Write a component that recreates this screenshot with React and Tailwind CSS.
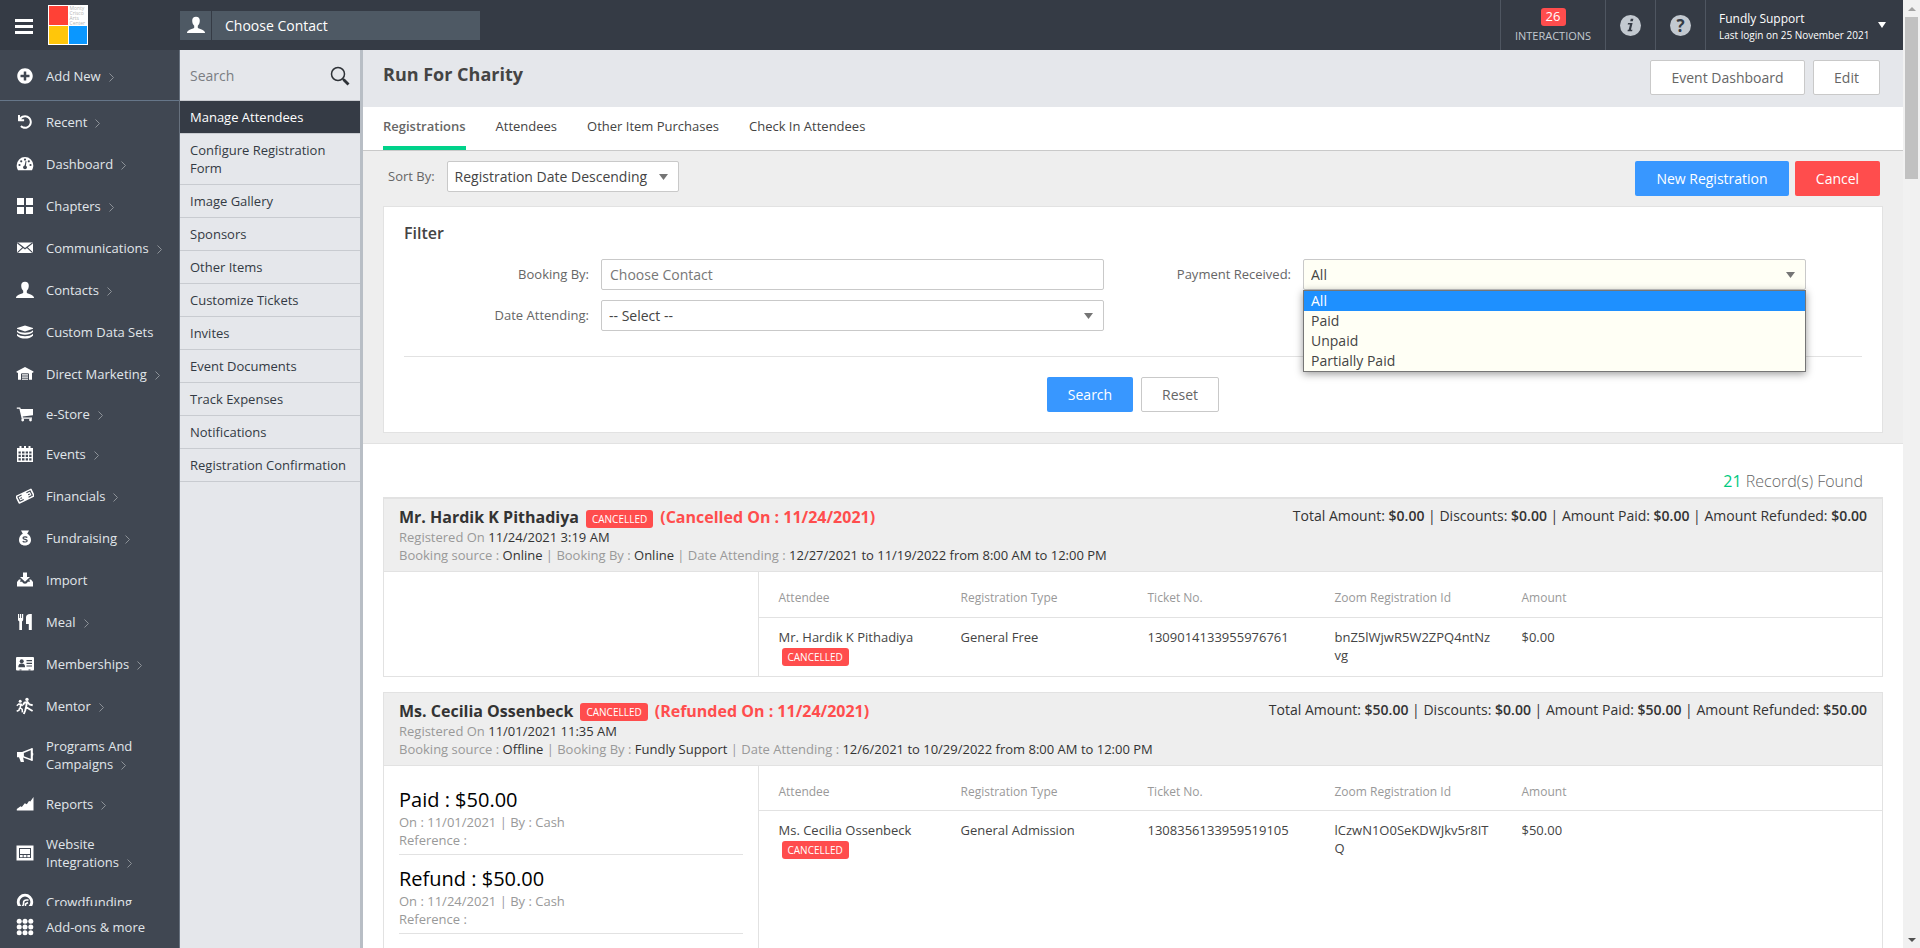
import React from "react";
import { FaPlusCircle, FaUndo } from "react-icons/fa";

const DARK = "#404752";

function Glyph({ children, className = "size-[18px]" }) {
  return (
    <svg viewBox="0 0 18 18" className={`${className} shrink-0`} fill="currentColor" aria-hidden="true">
      {children}
    </svg>
  );
}

const UserShape = () => (
  <path d="M9 .8c2.500 0 3.800 1.600 3.800 4 0 2.100-.8 4-2 5v2c0 1 6.200 1.600 7.200 4.600V17H0v-.6c1-3 7.200-3.600 7.200-4.600v-2c-1.200-1-2-2.900-2-5C5.200 2.400 6.500.8 9 .8z" />
);

const icons = {
  dashboard: (
    <>
      <path d="M9 2a8.300 8.300 0 0 0-8.300 8.300c0 2 .5 3.500 1.300 4.900h14c.8-1.400 1.300-2.900 1.300-4.900A8.300 8.300 0 0 0 9 2z" />
      <g fill={DARK}>
        <circle cx="3.500" cy="10" r="1.100" />
        <circle cx="5.200" cy="6.300" r="1.100" />
        <circle cx="9" cy="4.600" r="1.100" />
        <circle cx="12.800" cy="6.300" r="1.100" />
        <circle cx="14.500" cy="10" r="1.100" />
        <circle cx="9" cy="12.300" r="1.900" />
        <path d="M8.400 11.500l1.200-5.500.9.200-.7 5.600z" />
      </g>
    </>
  ),
  chapters: <path d="M1 1h7v7H1zM10 1h7v7h-7zM1 10h7v7H1zM10 10h7v7h-7z" />,
  mail: (
    <>
      <rect x="1" y="3.500" width="16" height="10.500" rx="1" />
      <path d="M1.500 4L9 9.800 16.500 4M1.500 13.700l5.200-5M16.500 13.700l-5.200-5" stroke={DARK} strokeWidth="1.100" fill="none" />
    </>
  ),
  user: <UserShape />,
  stack: (
    <>
      <path d="M9 2.500l8 2.400v.8L9 8.400 1 5.700v-.8z" />
      <path d="M1 7.200c2 1.800 5 2.500 8 2.500s6-.7 8-2.500v1.900C15 11 12 11.800 9 11.800S3 11 1 9.100z" />
      <path d="M1 10.700c2 1.800 5 2.500 8 2.500s6-.7 8-2.500v2C15 14.700 12 15.500 9 15.500s-6-.8-8-2.800z" />
    </>
  ),
  house: (
    <>
      <path d="M9 2l8.600 4.600-.5 1.200H16v7H2v-7H.9L.4 6.600z" />
      <path d="M5.500 15V8.800h7V15M5.500 11h7M5.500 13.200h7" fill="none" stroke={DARK} strokeWidth="1" />
    </>
  ),
  cart: (
    <>
      <path d="M.8 2.500h3.400l.6 1.500H17v6.300L6.700 11.600l.2 1H16v1.200H5.700L3.400 3.800H.8z" />
      <circle cx="6.700" cy="15" r="1.400" />
      <circle cx="14.500" cy="15" r="1.400" />
    </>
  ),
  calendar: (
    <>
      <path d="M1 3h2.500V1h2v2h2.500V1h2v2h2.500V1h2v2H17v14H1z" />
      <path
        d="M2.500 6.500h2.300v2H2.500zM6 6.500h2.500v2H6zM9.700 6.500h2.300v2H9.700zM13.200 6.500h2.300v2h-2.300zM2.500 9.800h2.300V12H2.500zM6 9.800h2.500V12H6zM9.700 9.800h2.300V12H9.700zM13.200 9.800h2.300V12h-2.300zM2.500 13.300h2.300v2.200H2.500zM6 13.300h2.500v2.200H6zM9.700 13.300h2.300v2.200H9.700zM13.200 13.300h2.300v2.200h-2.300z"
        fill={DARK}
      />
    </>
  ),
  money: (
    <g transform="rotate(-26 9 9)">
      <rect x="0" y="4.800" width="18" height="8.800" rx=".8" />
      <g fill="none" stroke={DARK} strokeWidth="1.100">
        <path d="M6.300 6.700H2.200v4.900h4.100M11.700 6.700h4.100v4.900h-4.100" />
        <path d="M3.800 9.200h1.800M12.400 9.200h1.800" />
      </g>
    </g>
  ),
  bag: (
    <>
      <path d="M5 1.500h8l-1.800 3.300C13.600 6 15 8.300 15 11c0 3.300-2.500 5.500-6 5.500S3 14.300 3 11c0-2.700 1.400-5 3.800-6.200z" />
      <path d="M11.300 8.500c-1-1-4.300-1-4.300.6 0 1.700 4.200 1 4.200 2.700 0 1.500-3.200 1.600-4.500.4" stroke={DARK} strokeWidth="1.200" fill="none" />
    </>
  ),
  import: (
    <>
      <path d="M7 1.500h4v4.500h3L9 10.800 4 6h3z" />
      <path d="M1 11l2-2.500h1.800L4 10.800h2.200c.5 1.300 1.500 2 2.800 2s2.300-.7 2.800-2H14l-.8-2.300H15l2 2.500v4.500H1z" />
    </>
  ),
  meal: (
    <>
      <path d="M2 1h1.200v4h.8V1h1.200v4h.8V1h1.200v5.500c0 1-.6 1.500-1.200 2V17H3.300V8.500C2.600 8 2 7.500 2 6.500z" />
      <path d="M10 4.500C10 2.300 11.500 1 14 1h1.800v16h-3v-6H10z" />
    </>
  ),
  card: (
    <>
      <rect x="0" y="2" width="18" height="13.500" rx="1" />
      <g fill={DARK}>
        <circle cx="5.700" cy="6.300" r="2" />
        <path d="M2.300 12.200c0-2.800 1.300-3.700 3.400-3.700s3.400.9 3.400 3.700zM10.500 5h5.500v1.200h-5.500zM10.500 7.700h5.500v1.200h-5.500zM10.500 10.400h5.500v1.200h-5.500zM3.500 14.500h2v1h-2zM12.500 14.500h2v1h-2z" />
      </g>
    </>
  ),
  mentor: (
    <>
      <circle cx="4.200" cy="4.200" r="1.500" />
      <circle cx="11" cy="2.400" r="1.700" />
      <path
        d="M.8 8.800l2-1.800 2.400.3 1.300 1.900M4.600 7.500l-.4 3.300 2 1.600.2 3M3.600 11l-.6 2.300-2.300.9"
        stroke="currentColor"
        strokeWidth="1.500"
        fill="none"
      />
      <path
        d="M7 8l1.500-2.500 3-.5 2 2.500 3.200.7M10.900 5.500l-.8 4.500 3.500 2.200 3 1.800M10 10.300l-.8 3.200-1.400 3.500"
        stroke="currentColor"
        strokeWidth="1.900"
        fill="none"
      />
    </>
  ),
  horn: (
    <>
      <path d="M1 6h6.500v5H7l1 5H4.800L3 11.200H1z" />
      <path d="M7 6.500L15.500 3v11L7 10.800z" fill="none" stroke="currentColor" strokeWidth="1.500" />
      <path d="M15.500 2.200h1.300v4.600c.7.400.7 2.600 0 3v4.900h-1.300z" />
    </>
  ),
  chart: <path d="M.8 15.500v-1.500l3.800-2.800 1.200.8 3-3.800 2 1L13 5.900l1.300.5L17.500 2v13.500z" />,
  site: (
    <>
      <path d="M.5 1.500h17v15H.5z" />
      <path d="M3 4h12v10H3z" fill={DARK} />
      <path d="M4 5h10v5H4zM4 11h2.700v2.200H4zM7.600 11h2.800v2.200H7.600zM11.300 11H14v2.200h-2.700z" />
    </>
  ),
  crowd: (
    <>
      <circle cx="9" cy="9" r="6.800" fill="none" stroke="currentColor" strokeWidth="2.800" />
      <path d="M6 14l1.500-2.500V10C7.500 8 8.500 7 10.500 7h2M9.500 14v-3l2.500-1.500" fill="none" stroke="currentColor" strokeWidth="1.500" />
    </>
  ),
  grid: (
    <>
      {[3.2, 9, 14.8].map((y) => [3.2, 9, 14.8].map((x) => <circle key={`${x}-${y}`} cx={x} cy={y} r="2.500" />))}
    </>
  ),
};

const nav = [
  ["Recent", null, true],
  ["Dashboard", "dashboard", true],
  ["Chapters", "chapters", true],
  ["Communications", "mail", true],
  ["Contacts", "user", true],
  ["Custom Data Sets", "stack", false],
  ["Direct Marketing", "house", true],
  ["e-Store", "cart", true, "h-[38px]"],
  ["Events", "calendar", true],
  ["Financials", "money", true],
  ["Fundraising", "bag", true],
  ["Import", "import", false],
  ["Meal", "meal", true],
  ["Memberships", "card", true],
  ["Mentor", "mentor", true],
  ["Programs And Campaigns", "horn", true, "h-14"],
  ["Reports", "chart", true],
  ["Website Integrations", "site", true, "h-14"],
  ["Crowdfunding", "crowd", false],
];

const subNav = [
  "Manage Attendees",
  "Configure Registration Form",
  "Image Gallery",
  "Sponsors",
  "Other Items",
  "Customize Tickets",
  "Invites",
  "Event Documents",
  "Track Expenses",
  "Notifications",
  "Registration Confirmation",
];

function Arrow() {
  return (
    <svg viewBox="0 0 5 9" className="ml-2 inline-block h-[9px] w-[5px]" aria-hidden="true">
      <path d="M.5.5l4 4-4 4" fill="none" stroke="#8d9298" strokeWidth="1" />
    </svg>
  );
}

function NavItem({ label, icon, arrow, height = "h-[42px]" }) {
  return (
    <a href="#" className={`flex shrink-0 items-center gap-3 pl-4 text-[13px] leading-[18px] text-[#e1e6ea] ${height}`}>
      <span className="flex w-[18px] shrink-0 justify-center text-white">{icon}</span>
      <span className="max-w-[118px]">
        {label}
        {arrow && <Arrow />}
      </span>
    </a>
  );
}

function Header() {
  return (
    <header className="flex h-[50px] shrink-0 bg-[#353b45] text-white">
      <div className="flex w-[180px] shrink-0 items-center gap-[15px] pl-[15px]">
        <button type="button" aria-label="Menu" className="flex w-[18px] flex-col gap-[3px] pt-[3px]">
          <span className="h-[3px] w-full bg-white" />
          <span className="h-[3px] w-full bg-white" />
          <span className="h-[3px] w-full bg-white" />
        </button>
        <div className="grid size-10 grid-cols-2 grid-rows-2 gap-px overflow-hidden bg-white p-px">
          <span className="bg-[#ff4136]" />
          <span className="min-h-0 pl-px text-[5px] leading-[5px] text-[#b5b5b5]">
            Monty
            <br />
            Crisco
            <br />
            Arts
            <br />
            Center
          </span>
          <span className="bg-[#ffc60a]" />
          <span className="bg-[#0a97ff]" />
        </div>
      </div>
      <div className="flex w-[300px] items-center gap-px">
        <span className="flex h-[29px] w-[31px] items-center justify-center bg-[#4e5964]">
          <Glyph>
            <UserShape />
          </Glyph>
        </span>
        <input
          aria-label="Choose Contact"
          placeholder="Choose Contact"
          className="h-[29px] min-w-0 flex-1 bg-[#4e5964] px-[13px] text-sm text-white placeholder:text-white"
        />
      </div>
      <div className="ml-auto flex">
        <a href="#" className="flex w-[105px] flex-col items-center border-l border-[#4f5661] pt-2 text-[#c3c9d0]">
          <span className="flex h-[18px] w-[25px] items-center justify-center rounded-[3px] bg-[#ff4d4d] text-[13px] text-white">26</span>
          <span className="mt-[3px] text-[11px] leading-[14px]">INTERACTIONS</span>
        </a>
        <button type="button" aria-label="Information" className="flex w-[50px] items-center justify-center border-l border-[#4f5661] text-[#c3c9d0]">
          <svg viewBox="0 0 21 21" className="size-[21px]" aria-hidden="true">
            <circle cx="10.500" cy="10.500" r="10.500" fill="currentColor" />
            <path d="M10.800 3.800h2.600l-.6 2.500h-2.600zM8 8h4.600l-1.700 6.800h1.500l-.3 1.400H7.500l.3-1.400h.9L10 9.400H7.700z" fill="#353b45" />
          </svg>
        </button>
        <button type="button" aria-label="Help" className="flex w-[50px] items-center justify-center border-l border-[#4f5661]">
          <span className="flex size-[21px] items-center justify-center rounded-full bg-[#c3c9d0] text-[17px] leading-[21px] font-bold text-[#353b45]">?</span>
        </button>
        <button type="button" className="flex w-[198px] items-center gap-[9px] border-l border-[#4f5661] pl-[13px] text-left">
          <span className="pt-[3px]">
            <span className="block text-xs leading-4">Fundly Support</span>
            <span className="block text-[10px] leading-4">Last login on 25 November 2021</span>
          </span>
          <svg viewBox="0 0 8 6" className="h-[6px] w-2" aria-hidden="true">
            <path d="M0 0h8L4 6z" fill="#fff" />
          </svg>
        </button>
      </div>
    </header>
  );
}

function Caret() {
  return (
    <svg viewBox="0 0 9 6" className="pointer-events-none absolute top-[13px] right-[11px] h-[6px] w-[9px]" aria-hidden="true">
      <path d="M0 0h9L4.500 6z" fill="#757575" />
    </svg>
  );
}

const field = "h-[31px] w-full appearance-none rounded-xs border border-[#c9c9c9] text-sm text-[#444]";

function Select({ id, options, tone = "bg-white", children }) {
  return (
    <div className="relative min-w-0 flex-1">
      <select id={id} className={`${field} px-[7px] ${tone}`}>
        {options.map((o) => (
          <option key={o}>{o}</option>
        ))}
      </select>
      <Caret />
      {children}
    </div>
  );
}

const btn = "h-[35px] rounded-xs text-sm";
const plainBtn = `${btn} border border-[#c9c9c9] bg-white text-[#666]`;

function FieldLabel({ htmlFor, children }) {
  return (
    <label htmlFor={htmlFor} className="w-[185px] shrink-0 pt-px text-right text-[13px] text-[#666]">
      {children}
    </label>
  );
}

const payOptions = ["All", "Paid", "Unpaid", "Partially Paid"];

function FilterPanel() {
  return (
    <section className="border border-[#e2e2e2] bg-white px-5 pt-4 pb-5">
      <h2 className="text-base leading-5 font-semibold text-[#444]">Filter</h2>
      <div className="mt-4 grid grid-cols-2 gap-x-[2px] gap-y-[10px] pr-14">
        <div className="flex items-center gap-3">
          <FieldLabel htmlFor="booking">Booking By:</FieldLabel>
          <input id="booking" placeholder="Choose Contact" className={`${field} bg-white px-2 placeholder:text-[#777]`} />
        </div>
        <div className="flex items-center gap-3">
          <FieldLabel htmlFor="payment">Payment Received:</FieldLabel>
          <Select id="payment" options={payOptions} tone="bg-[#fffff5]">
            <ul className="absolute inset-x-0 top-[31px] z-10 border border-[#767676] bg-[#fffff5] text-sm leading-5 text-[#444] shadow-[0_2px_8px_rgba(0,0,0,0.4)]">
              {payOptions.map((o) => (
                <li key={o} className={`px-[7px] ${o === "All" ? "bg-[#1e90ff] text-white" : ""}`}>
                  {o}
                </li>
              ))}
            </ul>
          </Select>
        </div>
        <div className="flex items-center gap-3">
          <FieldLabel htmlFor="date">Date Attending:</FieldLabel>
          <Select id="date" options={["-- Select --"]} />
        </div>
      </div>
      <div className="mt-[25px] flex justify-center gap-2 border-t border-[#e2e2e2] pt-5">
        <button type="button" className={`${btn} w-[86px] bg-[#3897ff] text-white`}>Search</button>
        <button type="button" className={`${plainBtn} w-[78px]`}>Reset</button>
      </div>
    </section>
  );
}

function Badge({ className = "" }) {
  return (
    <span className={`inline-block h-[18px] rounded-[3px] bg-[#ff4d4d] px-[6px] text-[10px] leading-[18px] font-normal text-white ${className}`}>
      CANCELLED
    </span>
  );
}

const records = [
  {
    name: "Mr. Hardik K Pithadiya",
    status: "(Cancelled On : 11/24/2021)",
    registered: "11/24/2021 3:19 AM",
    source: "Online",
    by: "Online",
    dates: "12/27/2021 to 11/19/2022 from 8:00 AM to 12:00 PM",
    totals: ["$0.00", "$0.00", "$0.00", "$0.00"],
    payments: [],
    row: ["General Free", "1309014133955976761", "bnZ5lWjwR5W2ZPQ4ntNzvg", "$0.00"],
  },
  {
    name: "Ms. Cecilia Ossenbeck",
    status: "(Refunded On : 11/24/2021)",
    registered: "11/01/2021 11:35 AM",
    source: "Offline",
    by: "Fundly Support",
    dates: "12/6/2021 to 10/29/2022 from 8:00 AM to 12:00 PM",
    totals: ["$50.00", "$0.00", "$50.00", "$50.00"],
    payments: [
      ["Paid : $50.00", "On : 11/01/2021 | By : Cash"],
      ["Refund : $50.00", "On : 11/24/2021 | By : Cash"],
    ],
    row: ["General Admission", "1308356133959519105", "lCzwN1O0SeKDWJkv5r8ITQ", "$50.00"],
  },
];

const totalLabels = ["Total Amount:", "Discounts:", "Amount Paid:", "Amount Refunded:"];

function Record({ r, first, last }) {
  return (
    <article className={`shrink-0 border border-[#e2e2e2] ${first ? "border-t-2" : "mt-[15px]"}`}>
      <div className="flex h-[73px] justify-between border-b border-[#e2e2e2] bg-[#eee] px-[15px] text-[#333]">
        <div className="pt-[7px] text-[13px] leading-[18px]">
          <h3 className="flex items-center text-base leading-[22px] font-bold">
            {r.name}
            <Badge className="mt-[3px] ml-[7px]" />
            <span className="ml-[7px] text-[#ff4d4d]">{r.status}</span>
          </h3>
          <p className="text-[#999]">
            Registered On <span className="text-[#333]">{r.registered}</span>
          </p>
          <p className="text-[#999]">
            Booking source : <span className="text-[#333]">{r.source}</span> | Booking By :{" "}
            <span className="text-[#333]">{r.by}</span> | Date Attending : <span className="text-[#333]">{r.dates}</span>
          </p>
        </div>
        <p className="pt-2 text-sm leading-[18px] whitespace-nowrap">
          {totalLabels.map((l, i) => (
            <React.Fragment key={l}>
              {i > 0 && " | "}
              {l} <b className="font-semibold">{r.totals[i]}</b>
            </React.Fragment>
          ))}
        </p>
      </div>
      <div className={`flex ${last ? "min-h-[240px]" : ""}`}>
        <div className="w-1/4 shrink-0 border-r border-[#e2e2e2] px-[15px] pt-[21px] text-[13px] leading-[18px] text-[#999]">
          {r.payments.map(([title, line]) => (
            <div key={title} className="mb-[11px] border-b border-[#e2e2e2] pb-[5px]">
              <p className="text-xl leading-[26px] text-black">{title}</p>
              <p>{line}</p>
              <p>Reference :</p>
            </div>
          ))}
        </div>
        <div className="min-w-0 flex-1">
          <table className="w-full table-fixed text-left text-[13px] leading-[18px] text-[#444]">
            <thead className="text-xs text-[#999]">
              <tr className="h-[45px] border-b border-[#e2e2e2]">
                <th className="w-[202px] pt-2 pl-5 font-normal">Attendee</th>
                <th className="w-[187px] pt-2 font-normal">Registration Type</th>
                <th className="w-[187px] pt-2 font-normal">Ticket No.</th>
                <th className="w-[187px] pt-2 font-normal">Zoom Registration Id</th>
                <th className="pt-2 font-normal">Amount</th>
              </tr>
            </thead>
            <tbody>
              <tr className="align-top">
                <td className="py-[10px] pl-5">
                  <span className="block">{r.name}</span>
                  <Badge className="mt-[2px] ml-[3px] align-top" />
                </td>
                {r.row.map((c) => (
                  <td key={c} className="py-[10px] pr-7 break-all">{c}</td>
                ))}
              </tr>
            </tbody>
          </table>
        </div>
      </div>
    </article>
  );
}

export default function App() {
  return (
    <div className="flex h-screen overflow-hidden bg-white font-['Open_Sans',sans-serif]">
      <div className="flex min-w-0 flex-1 flex-col">
        <Header />
        <div className="flex min-h-0 flex-1">
          <nav className="flex w-[180px] shrink-0 flex-col border-r border-[#67717e] bg-[#404752]">
            <div className="border-b border-[#667689]">
              <NavItem label="Add New" icon={<FaPlusCircle className="size-4" />} arrow height="h-[50px] pt-[2px]" />
            </div>
            <div className="flex min-h-0 flex-1 flex-col overflow-hidden">
              {nav.map(([label, icon, arrow, height]) => (
                <NavItem
                  key={label}
                  label={label}
                  arrow={arrow}
                  height={height}
                  icon={icon ? <Glyph>{icons[icon]}</Glyph> : <FaUndo className="size-[14px]" />}
                />
              ))}
            </div>
            <NavItem label="Add-ons & more" icon={<Glyph>{icons.grid}</Glyph>} />
          </nav>

          <aside className="w-[183px] shrink-0 border-r-3 border-[#b8bec5] bg-[#e5e7eb]">
            <div className="flex h-[51px] items-center border-b border-[#c8cbd0] px-[10px] pt-[2px]">
              <input aria-label="Search" placeholder="Search" className="min-w-0 flex-1 text-sm placeholder:text-[#7a7d82]" />
              <svg viewBox="0 0 20 20" className="size-5" fill="none" stroke="#2d3136" aria-hidden="true">
                <circle cx="8" cy="8" r="6.500" strokeWidth="1.500" />
                <path d="M12.500 12.500l1.500 1.500" strokeWidth="1.500" />
                <path d="M13.500 13.500l5 5" strokeWidth="2.800" />
              </svg>
            </div>
            <ul className="text-[13px] leading-[18px] text-[#333a44]">
              {subNav.map((s, i) => (
                <li key={s} className="border-b border-[#c8cbd0]">
                  <a href="#" className={`block py-[7px] pl-[10px] ${i === 0 ? "bg-[#353b45] text-white" : ""}`}>
                    {s}
                  </a>
                </li>
              ))}
            </ul>
          </aside>

          <main className="flex min-w-0 flex-1 flex-col overflow-hidden">
            <div className="flex h-[57px] shrink-0 items-start justify-between bg-[#e5e7eb] pt-[10px] pr-[23px] pl-5">
              <h1 className="pt-[2px] text-lg leading-6 font-bold text-[#444]">Run For Charity</h1>
              <div className="flex gap-2">
                <button type="button" className={`${plainBtn} w-[155px]`}>Event Dashboard</button>
                <button type="button" className={`${plainBtn} w-[67px]`}>Edit</button>
              </div>
            </div>
            <div className="flex h-11 shrink-0 gap-[30px] border-b border-[#c9c9c9] px-5 text-[13px] leading-[38px] text-[#444]">
              <a href="#" className="h-[43px] border-b-4 border-[#00d28a] font-semibold text-[#666]">Registrations</a>
              <a href="#">Attendees</a>
              <a href="#">Other Item Purchases</a>
              <a href="#">Check In Attendees</a>
            </div>
            <div className="shrink-0 border-b border-[#e2e2e2] bg-[#eee] px-5 py-[10px]">
              <div className="flex items-start justify-between pr-[3px] pb-[10px] pl-[5px]">
                <div className="flex h-[31px] w-[291px] items-center gap-3">
                  <label htmlFor="sort" className="pt-px text-[13px] text-[#666]">Sort By:</label>
                  <Select id="sort" options={["Registration Date Descending"]} />
                </div>
                <div className="flex gap-[6px]">
                  <button type="button" className={`${btn} w-[154px] bg-[#3897ff] text-white`}>New Registration</button>
                  <button type="button" className={`${btn} w-[85px] bg-[#ff4d4d] text-white`}>Cancel</button>
                </div>
              </div>
              <FilterPanel />
            </div>
            <div className="flex flex-col px-5 pt-[25px]">
              <p className="pr-5 pb-1 text-right text-base leading-6 font-light text-[#666]">
                <span className="font-normal text-[#00c97f]">21</span> Record(s) Found
              </p>
              {records.map((r, i) => (
                <Record key={r.name} r={r} first={i === 0} last={i === records.length - 1} />
              ))}
            </div>
          </main>
        </div>
      </div>

      <div className="flex w-[17px] shrink-0 flex-col items-center bg-[#f1f1f1]" aria-hidden="true">
        <div className="flex h-[17px] items-center">
          <svg viewBox="0 0 8 4" className="h-1 w-2"><path d="M0 4h8L4 0z" fill="#a3a3a3" /></svg>
        </div>
        <div className="h-[162px] w-[13px] bg-[#c1c1c1]" />
        <div className="mt-auto flex h-[17px] items-center">
          <svg viewBox="0 0 8 4" className="h-1 w-2"><path d="M0 0h8L4 4z" fill="#505050" /></svg>
        </div>
      </div>
    </div>
  );
}
